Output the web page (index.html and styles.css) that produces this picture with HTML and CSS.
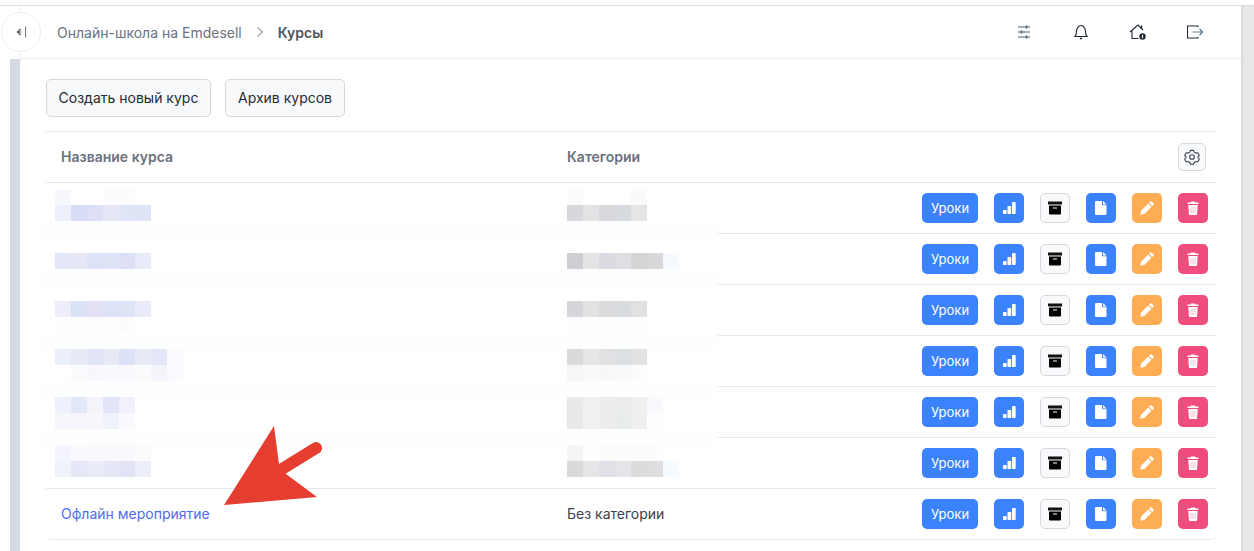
FILE: index.html
```html
<!DOCTYPE html>
<html lang="en">
<head>
    <meta charset="UTF-8">
    <meta name="viewport" content="width=device-width, initial-scale=1.0">
    <title>Курсы</title>
    <link rel="stylesheet" href="styles.css">
</head>
<body>

    <svg class="sprite">
        <symbol id="i-stats" viewBox="0 0 14 14"><rect x="1" y="9" width="3.700" height="4" rx="0.800" fill="#fff"/><rect x="5.500" y="5" width="3.700" height="8" rx="0.800" fill="#fff"/><rect x="10" y="1" width="3.700" height="12" rx="0.800" fill="#fff"/></symbol>
        <symbol id="i-archive" viewBox="0 0 14 14"><path d="M0 .500h14v3H0z" fill="#111"/><path fill-rule="evenodd" d="M1 4.500h12v8a1 1 0 0 1-1 1H2a1 1 0 0 1-1-1zM5 6.500V7.500h4V6.500z" fill="#000"/></symbol>
        <symbol id="i-file" viewBox="0 0 14 14"><path d="M2 0h6v3.500a.8.8 0 0 0 .8.8H12.500V13a1 1 0 0 1-1 1H2a1 1 0 0 1-1-1V1a1 1 0 0 1 1-1z" fill="#fff"/><path d="M9 0l3.500 3.500H9z" fill="#fff"/></symbol>
        <symbol id="i-pencil" viewBox="0 0 14 14"><path d="M8.200 2.500 11.500 5.800 4.300 13 .2 13.800 1 9.700z" fill="#fff"/><path d="m9 1.700 1.200-1.200a1 1 0 0 1 1.400 0l1.900 1.900a1 1 0 0 1 0 1.400l-1.200 1.200z" fill="#fff"/></symbol>
        <symbol id="i-trash" viewBox="0 0 14 14"><path d="M5 .500h4l.5 1H12.500v1.500H1.500V1.500h3z" fill="#fff"/><path d="M2.300 4h9.400l-.6 9a1 1 0 0 1-1 1H3.900a1 1 0 0 1-1-1z" fill="#fff"/><path d="M5 6v6M7 6v6M9 6v6" stroke="#f8c4d4"/></symbol>
    </svg>

    <div class="page">
        <div class="main">
            <header class="topbar">
                <button class="collapse-btn" type="button">
                    <svg width="12" height="12" viewBox="0 0 12 12" fill="none" stroke="#4b5563" stroke-width="1.200"><path d="M5.500 3 2.500 6l3 3M2.500 6h4"/><path d="M10.500 .500v11" stroke="#6b7280" stroke-width="1"/></svg>
                </button>
                <nav class="crumbs">
                    <a class="crumb" href="#">Онлайн-школа на Emdesell</a>
                    <svg class="crumb-sep" width="8" height="12" viewBox="0 0 8 12" fill="none" stroke="#9ca3af" stroke-width="1.100"><path d="m1.500 1.500 5 4.500-5 4.500"/></svg>
                    <span class="crumb-current">Курсы</span>
                </nav>
                <div class="top-icons">
                    <svg class="first-icon" width="16" height="16" viewBox="0 0 16 16" fill="none" stroke="#8a919c" stroke-width="1.300"><path d="M2 3h12M2 8h12M2 13h12"/><path d="M10.500 1.500v3M5.500 6.500v3M10.500 11.500v3" stroke="#3f5f80" stroke-width="1.500"/></svg>
                    <svg width="16" height="16" viewBox="0 0 16 16" fill="none" stroke="#1f2937" stroke-width="1.100"><path d="M2 12.500c1-1 1.500-2 1.500-5 0-3 2-6 4.500-6s4.500 3 4.500 6c0 3 .5 4 1.500 5z"/><path d="M7 14.500h2" stroke-width="1.500"/></svg>
                    <svg width="18" height="18" viewBox="0 0 18 18" fill="none" stroke="#1f2937" stroke-width="1.100"><path d="M1 9 9 2l5 5"/><path d="M3 8v7.500h6.500"/><path d="M12.500 2.500v3" stroke-width="1.500"/><circle cx="13.500" cy="13.500" r="3.200" fill="#1f2937" stroke="none"/><path d="M13.500 11.800v3.400" stroke="#fff"/></svg>
                    <svg width="18" height="16" viewBox="0 0 18 16" fill="none" stroke="#1f2937" stroke-width="1.100"><path d="M11 3V2H.5v12H11V13"/><path d="M5.500 8H15" stroke="#9ca3af" stroke-width="1.500"/><path d="m12.500 5 3 3-3 3" stroke="#4b6a8f"/></svg>
                </div>
            </header>

            <div class="body-row">
                <div class="rail"></div>
                <div class="content">
                    <div class="toolbar">
                        <button class="btn btn-create" type="button">Создать новый курс</button>
                        <button class="btn btn-archive" type="button">Архив курсов</button>
                    </div>

                    <div class="course-table">
                        <div class="row head-row">
                            <div class="cell-name">Название курса</div>
                            <div class="cell-cat">Категории</div>
                            <div class="cell-actions">
                                <button class="settings-btn" type="button">
                                    <svg width="16" height="16" viewBox="0 0 24 24" fill="none" stroke="#374151" stroke-width="1.600"><path d="M9.600 3.100h4.800l.9 2.700 2.500 1.400 2.800-.6 2.400 4.100-1.900 2.100v1.400l1.900 2.100-2.400 4.100-2.800-.6-2.500 1.400-.9 2.700H9.600l-.9-2.700-2.500-1.400-2.800.6-2.400-4.100 1.900-2.100v-1.400L1 10.700l2.400-4.100 2.800.6 2.500-1.400z" transform="translate(0 -1)"/><circle cx="12" cy="12" r="3.500"/></svg>
                                </button>
                            </div>
                        </div>

                        <div class="row course-row">
                            <div class="cell-name"></div>
                            <div class="cell-cat"></div>
                            <div class="cell-actions">
                                <button class="act act-blue lessons" type="button">Уроки</button>
                                <button class="act act-blue" type="button"><svg class="ico"><use href="#i-stats"/></svg></button>
                                <button class="act act-light" type="button"><svg class="ico"><use href="#i-archive"/></svg></button>
                                <button class="act act-blue" type="button"><svg class="ico"><use href="#i-file"/></svg></button>
                                <button class="act act-orange" type="button"><svg class="ico"><use href="#i-pencil"/></svg></button>
                                <button class="act act-red" type="button"><svg class="ico"><use href="#i-trash"/></svg></button>
                            </div>
                        </div>

                        <div class="row course-row">
                            <div class="cell-name"></div>
                            <div class="cell-cat"></div>
                            <div class="cell-actions">
                                <button class="act act-blue lessons" type="button">Уроки</button>
                                <button class="act act-blue" type="button"><svg class="ico"><use href="#i-stats"/></svg></button>
                                <button class="act act-light" type="button"><svg class="ico"><use href="#i-archive"/></svg></button>
                                <button class="act act-blue" type="button"><svg class="ico"><use href="#i-file"/></svg></button>
                                <button class="act act-orange" type="button"><svg class="ico"><use href="#i-pencil"/></svg></button>
                                <button class="act act-red" type="button"><svg class="ico"><use href="#i-trash"/></svg></button>
                            </div>
                        </div>

                        <div class="row course-row">
                            <div class="cell-name"></div>
                            <div class="cell-cat"></div>
                            <div class="cell-actions">
                                <button class="act act-blue lessons" type="button">Уроки</button>
                                <button class="act act-blue" type="button"><svg class="ico"><use href="#i-stats"/></svg></button>
                                <button class="act act-light" type="button"><svg class="ico"><use href="#i-archive"/></svg></button>
                                <button class="act act-blue" type="button"><svg class="ico"><use href="#i-file"/></svg></button>
                                <button class="act act-orange" type="button"><svg class="ico"><use href="#i-pencil"/></svg></button>
                                <button class="act act-red" type="button"><svg class="ico"><use href="#i-trash"/></svg></button>
                            </div>
                        </div>

                        <div class="row course-row">
                            <div class="cell-name"></div>
                            <div class="cell-cat"></div>
                            <div class="cell-actions">
                                <button class="act act-blue lessons" type="button">Уроки</button>
                                <button class="act act-blue" type="button"><svg class="ico"><use href="#i-stats"/></svg></button>
                                <button class="act act-light" type="button"><svg class="ico"><use href="#i-archive"/></svg></button>
                                <button class="act act-blue" type="button"><svg class="ico"><use href="#i-file"/></svg></button>
                                <button class="act act-orange" type="button"><svg class="ico"><use href="#i-pencil"/></svg></button>
                                <button class="act act-red" type="button"><svg class="ico"><use href="#i-trash"/></svg></button>
                            </div>
                        </div>

                        <div class="row course-row">
                            <div class="cell-name"></div>
                            <div class="cell-cat"></div>
                            <div class="cell-actions">
                                <button class="act act-blue lessons" type="button">Уроки</button>
                                <button class="act act-blue" type="button"><svg class="ico"><use href="#i-stats"/></svg></button>
                                <button class="act act-light" type="button"><svg class="ico"><use href="#i-archive"/></svg></button>
                                <button class="act act-blue" type="button"><svg class="ico"><use href="#i-file"/></svg></button>
                                <button class="act act-orange" type="button"><svg class="ico"><use href="#i-pencil"/></svg></button>
                                <button class="act act-red" type="button"><svg class="ico"><use href="#i-trash"/></svg></button>
                            </div>
                        </div>

                        <div class="row course-row">
                            <div class="cell-name"></div>
                            <div class="cell-cat"></div>
                            <div class="cell-actions">
                                <button class="act act-blue lessons" type="button">Уроки</button>
                                <button class="act act-blue" type="button"><svg class="ico"><use href="#i-stats"/></svg></button>
                                <button class="act act-light" type="button"><svg class="ico"><use href="#i-archive"/></svg></button>
                                <button class="act act-blue" type="button"><svg class="ico"><use href="#i-file"/></svg></button>
                                <button class="act act-orange" type="button"><svg class="ico"><use href="#i-pencil"/></svg></button>
                                <button class="act act-red" type="button"><svg class="ico"><use href="#i-trash"/></svg></button>
                            </div>
                        </div>

                        <div class="row course-row last-row">
                            <div class="cell-name"><a class="course-link" href="#">Офлайн мероприятие</a></div>
                            <div class="cell-cat cat-text">Без категории</div>
                            <div class="cell-actions">
                                <button class="act act-blue lessons" type="button">Уроки</button>
                                <button class="act act-blue" type="button"><svg class="ico"><use href="#i-stats"/></svg></button>
                                <button class="act act-light" type="button"><svg class="ico"><use href="#i-archive"/></svg></button>
                                <button class="act act-blue" type="button"><svg class="ico"><use href="#i-file"/></svg></button>
                                <button class="act act-orange" type="button"><svg class="ico"><use href="#i-pencil"/></svg></button>
                                <button class="act act-red" type="button"><svg class="ico"><use href="#i-trash"/></svg></button>
                            </div>
                        </div>

                        <!-- pixelated patch hiding the course names -->
                        <div class="redact">
                            <div class="strip s1"><i></i><b></b></div>
                            <div class="strip s2"><i></i><b></b></div>
                            <div class="strip band"></div>
                            <div class="strip"></div>
                            <div class="strip s3"><i></i><b></b></div>
                            <div class="strip band"></div>
                            <div class="strip"></div>
                            <div class="strip s4"><i></i><b></b></div>
                            <div class="strip s5"><i></i><b></b></div>
                            <div class="strip band"></div>
                            <div class="strip s6"><i></i><b></b></div>
                            <div class="strip s7"><i></i><b></b></div>
                            <div class="strip band"></div>
                            <div class="strip s8"><i></i><b></b></div>
                            <div class="strip s9"><i></i><b></b></div>
                            <div class="strip band"></div>
                            <div class="strip s10"><i></i><b></b></div>
                            <div class="strip s11"><i></i><b></b></div>
                        </div>

                        <svg class="red-arrow" width="100" height="84" viewBox="0 0 100 84"><path d="M58 43 92 22" stroke="#e53e30" stroke-width="12" stroke-linecap="round"/><path d="M50 0 55 38 62 48 93 71 0 79z" fill="#e53e30"/></svg>
                    </div>
                </div>
            </div>
        </div>
        <div class="gutter"></div>
    </div>

</body>
</html>
```

FILE: styles.css
```css
* {
    box-sizing: border-box;
}

body {
    margin: 0;
    height: 551px;
    overflow: hidden;
    background: #fff;
    font-family: Inter, "Noto Sans", sans-serif;
    font-size: 14px;
    color: #1f2937;
}

button {
    font-family: inherit;
}

.sprite {
    display: none;
}

.ico {
    width: 14px;
    height: 14px;
}

.page {
    display: flex;
    height: 551px;
    padding-top: 5px;
}

.main {
    width: 1241px;
    border-top: 1px solid #e0e0e0;
}

.gutter {
    flex: 1;
    border-top: 1px solid #dedede;
    background: linear-gradient(90deg, #d9d9d9, #e8e8e8 4px);
}

/* top bar */
.topbar {
    position: relative;
    display: flex;
    align-items: center;
    height: 53px;
    margin-left: 20px;
    padding-left: 36px;
    border-left: 1px solid #eceef3;
    border-bottom: 1px solid #eceef3;
}

.collapse-btn {
    position: absolute;
    left: -20px;
    top: 6px;
    display: flex;
    align-items: center;
    justify-content: center;
    width: 40px;
    height: 40px;
    padding: 0;
    background: #fff;
    border: 1px solid #eceef3;
    border-radius: 50%;
}

.crumbs {
    display: flex;
    align-items: center;
}

.crumb {
    color: #6b7280;
    text-decoration: none;
}

.crumb-sep {
    margin: 0 14px 0 14px;
}

.crumb-current {
    font-weight: 600;
    color: #4b5563;
}

.top-icons {
    display: flex;
    align-items: center;
    gap: 40px;
    margin-left: auto;
    margin-right: 36px;
}

.first-icon {
    margin-right: 1px;
}

/* left rail + content */
.body-row {
    display: flex;
    height: 492px;
}

.rail {
    width: 10px;
    margin-left: 10px;
    background: #d5d9e1;
}

.content {
    flex: 1;
    padding: 20px 25px 0 26px;
}

.toolbar {
    display: flex;
    gap: 14px;
    margin-bottom: 14px;
}

.btn {
    height: 38px;
    padding: 0 0 2px;
    font-size: 14px;
    color: #1f2937;
    background: #f8f9fb;
    border: 1px solid #d6d8dc;
    border-radius: 5px;
}

.btn-create {
    width: 165px;
}

.btn-archive {
    width: 120px;
}

/* table */
.course-table {
    position: relative;
}

.row {
    display: flex;
    align-items: center;
    height: 51px;
    border-bottom: 1px solid #e7e8ea;
}

.head-row {
    height: 52px;
    border-top: 1px solid #e7e8ea;
    font-weight: 600;
    color: #6b7280;
}

.last-row {
    border-radius: 0 0 5px 5px;
}

.cell-name {
    width: 521px;
    padding: 0 0 2px 15px;
}

.cell-cat {
    width: 300px;
    padding-bottom: 2px;
}

.cat-text {
    color: #374151;
}

.cell-actions {
    display: flex;
    flex: 1;
    justify-content: flex-end;
    gap: 16px;
    padding-right: 8px;
}

.head-row .cell-actions {
    padding-right: 10px;
}

.course-link {
    color: #4f6af0;
    text-decoration: none;
}

.settings-btn {
    display: flex;
    align-items: center;
    justify-content: center;
    width: 28px;
    height: 28px;
    padding: 0;
    background: #f8f9fb;
    border: 1px solid #d6d8dc;
    border-radius: 5px;
}

.act {
    display: flex;
    align-items: center;
    justify-content: center;
    width: 30px;
    height: 30px;
    padding: 0;
    border: none;
    border-radius: 5px;
    color: #fff;
}

.lessons {
    width: 56px;
    font-size: 13px;
}

.act-blue {
    background: #3b82fe;
}

.act-light {
    background: #f8f9fb;
    border: 1px solid #d6d8dc;
}

.act-orange {
    background: #ffad55;
}

.act-red {
    background: #f04d7e;
}

/* overlays */
.redact {
    position: absolute;
    left: -6px;
    top: 58px;
    width: 678px;
}

.strip {
    display: flex;
    height: 16px;
    padding-left: 15px;
}

.strip i {
    width: 512px;
}

.strip b {
    flex: 1;
}

.band {
    background: #fdfefe;
}

.s1 i { background: linear-gradient(90deg, #f7f8fe 0 16px, transparent 0 48px, #fcfcfe 0 80px, transparent 0); }
.s1 b { background: linear-gradient(90deg, #fbfbfb 0 16px, transparent 0 64px, #fafafa 0 80px, transparent 0); }
.s2 i { background: linear-gradient(90deg, #eef1fb 0 16px, #d8ddf5 0 32px, #dde0f5 0 48px, #e5e7f7 0 64px, #e0e4f7 0 80px, #dfe3f6 0 96px, transparent 0); }
.s2 b { background: linear-gradient(90deg, #d7d7dc 0 16px, #e3e3e6 0 32px, #dad8dc 0 48px, #d7dbdf 0 64px, #e5e4e7 0 80px, transparent 0); }
.s3 i { background: linear-gradient(90deg, #e4e7f7 0 16px, #e5e6f6 0 32px, #dde2f6 0 48px, #dfe3f6 0 64px, #dcdff6 0 80px, #e8ebfa 0 96px, transparent 0); }
.s3 b { background: linear-gradient(90deg, #cfced3 0 16px, #e4e4e7 0 32px, #dcdae0 0 48px, #e0dee3 0 64px, #d5d5d8 0 80px, #d9d7d9 0 96px, #f6fafe 0 112px, transparent 0); }
.s4 i { background: linear-gradient(90deg, #eeeefa 0 16px, #d9e2f7 0 32px, #e2e2f4 0 48px, #dde2f7 0 64px, #dfe3f6 0 80px, #ebecfb 0 96px, transparent 0); }
.s4 b { background: linear-gradient(90deg, #d6d6da 0 16px, #e2e2e4 0 32px, #dcdadd 0 48px, #d8dcdf 0 64px, #e2e0e3 0 80px, transparent 0); }
.s5 i { background: linear-gradient(90deg, #fdfdfe 0 64px, #fcfcfd 0 80px, transparent 0); }
.s5 b { background: linear-gradient(90deg, #fefefe 0 80px, transparent 0); }
.s6 i { background: linear-gradient(90deg, #ebeefb 0 16px, #e8e9f7 0 32px, #e2e4f7 0 48px, #e8e9f6 0 64px, #dde1f7 0 80px, #e8eaf8 0 96px, #e4e7f7 0 112px, #fafaff 0 128px, transparent 0); }
.s6 b { background: linear-gradient(90deg, #dadadd 0 16px, #e6e6e7 0 32px, #e2e0e3 0 48px, #dde0e3 0 64px, #e3e1e4 0 80px, transparent 0); }
.s7 i { background: linear-gradient(90deg, #fff 0 16px, #fbfbfe 0 32px, #f7f7fc 0 48px, #f8f8fd 0 80px, #fbfbfe 0 96px, #f4f4fb 0 112px, #fbfbff 0 128px, transparent 0); }
.s7 b { background: linear-gradient(90deg, #f6f6f6 0 16px, #f9f9f9 0 32px, #f8f8f8 0 48px, #f8faf9 0 64px, #fcfcfc 0 80px, transparent 0); }
.s8 i { background: linear-gradient(90deg, #eef1fb 0 16px, #e2e8f7 0 32px, #f3f3fa 0 48px, #e3e5f8 0 64px, #f0f1fb 0 80px, transparent 0); }
.s8 b { background: linear-gradient(90deg, #e9e9eb 0 16px, #f0f0f0 0 32px, #eeedee 0 48px, #ebedec 0 64px, #f0eeef 0 80px, #f8f9fc 0 96px, transparent 0); }
.s9 i { background: linear-gradient(90deg, #f5f6fc 0 16px, #f5f5fb 0 32px, #f6f6fb 0 48px, #eff2fb 0 64px, #f9f9fe 0 80px, transparent 0); }
.s9 b { background: linear-gradient(90deg, #e9e9eb 0 16px, #f1f1f1 0 32px, #eeecee 0 48px, #e9eced 0 64px, #f0eeef 0 80px, #fcfffe 0 96px, transparent 0); }
.s10 i { background: linear-gradient(90deg, #f4f5fc 0 16px, #fafafe 0 32px, #f8f8fd 0 64px, #f9f9fd 0 80px, #fbfbfe 0 96px, transparent 0); }
.s10 b { background: linear-gradient(90deg, #f4f4f6 0 16px, #fdfdfd 0 32px, #fbfbfb 0 64px, #fcfcfc 0 96px, transparent 0); }
.s11 i { background: linear-gradient(90deg, #eff1fb 0 16px, #e6e8f7 0 32px, #eaebf8 0 48px, #e5e7f7 0 64px, #e2e4f6 0 80px, #eceefa 0 96px, transparent 0); }
.s11 b { background: linear-gradient(90deg, #dbd9dc 0 16px, #e6e6e9 0 32px, #e2e0e6 0 48px, #e6e4e8 0 64px, #dcdcde 0 80px, #dfdde0 0 96px, #f6fbff 0 112px, transparent 0); }

.red-arrow {
    position: absolute;
    left: 178px;
    top: 295px;
}
```
